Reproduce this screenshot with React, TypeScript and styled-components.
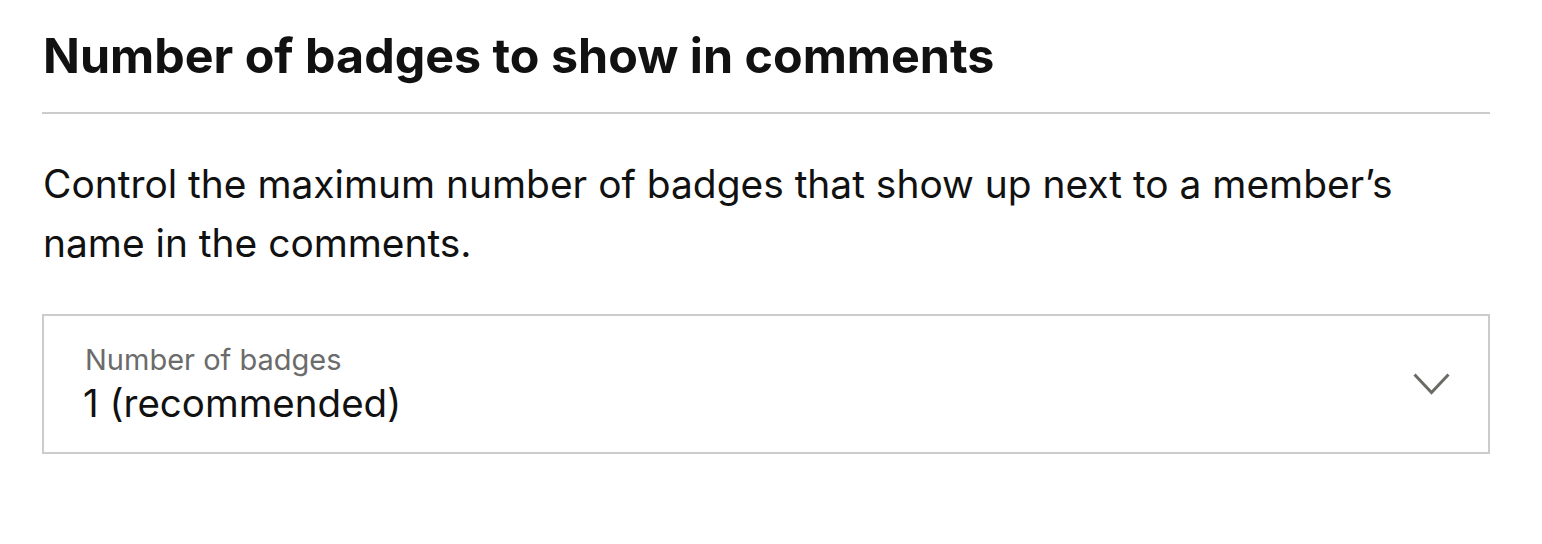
import React from "react";
import styled, { createGlobalStyle } from "styled-components";

const GlobalStyle = createGlobalStyle`
  html, body {
    margin: 0;
    padding: 0;
    background: #ffffff;
  }
  body {
    font-family: Inter, "Liberation Sans", Arial, sans-serif;
    color: #111111;
  }
`;

const Section = styled.section`
  width: 1448px;
  margin-left: 42px;
  padding-top: 24px;
`;

const Heading = styled.h2`
  margin: 0;
  font-size: 48.4px;
  line-height: 64px;
  font-weight: 700;
  color: #111111;
  padding-left: 1px;
  padding-bottom: 24px;
  border-bottom: 2px solid #cccccc;
`;

const Description = styled.p`
  margin: 0;
  padding: 40px 0 0 1px;
  font-size: 38.9px;
  line-height: 59px;
  color: #111111;
  max-width: 1420px;
`;

const SelectBox = styled.div`
  margin-top: 42px;
  box-sizing: border-box;
  height: 140px;
  border: 2px solid #cccccc;
  display: flex;
  align-items: center;
  justify-content: space-between;
  padding: 0 38px 0 39px;
`;

const SelectText = styled.div`
  display: flex;
  flex-direction: column;
`;

const SelectLabel = styled.span`
  font-size: 29px;
  line-height: 36px;
  color: #6b6b6b;
  padding-left: 2px;
`;

const SelectValue = styled.span`
  margin-top: 2px;
  font-size: 38.5px;
  line-height: 46px;
  color: #111111;
`;

const Chevron = styled.svg`
  width: 37px;
  height: 22px;
  color: #6b6b66;
`;

export default function App() {
  return (
    <>
      <GlobalStyle />
      <Section>
        <Heading>Number of badges to show in comments</Heading>
        <Description>
          Control the maximum number of badges that show up next to a member’s
          name in the comments.
        </Description>
        <SelectBox>
          <SelectText>
            <SelectLabel>Number of badges</SelectLabel>
            <SelectValue>1 (recommended)</SelectValue>
          </SelectText>
          <Chevron viewBox="0 0 37 22" fill="none">
            <path
              d="M1.5 1.5 L18.5 19.5 L35.5 1.5"
              stroke="currentColor"
              strokeWidth="3"
            />
          </Chevron>
        </SelectBox>
      </Section>
    </>
  );
}
